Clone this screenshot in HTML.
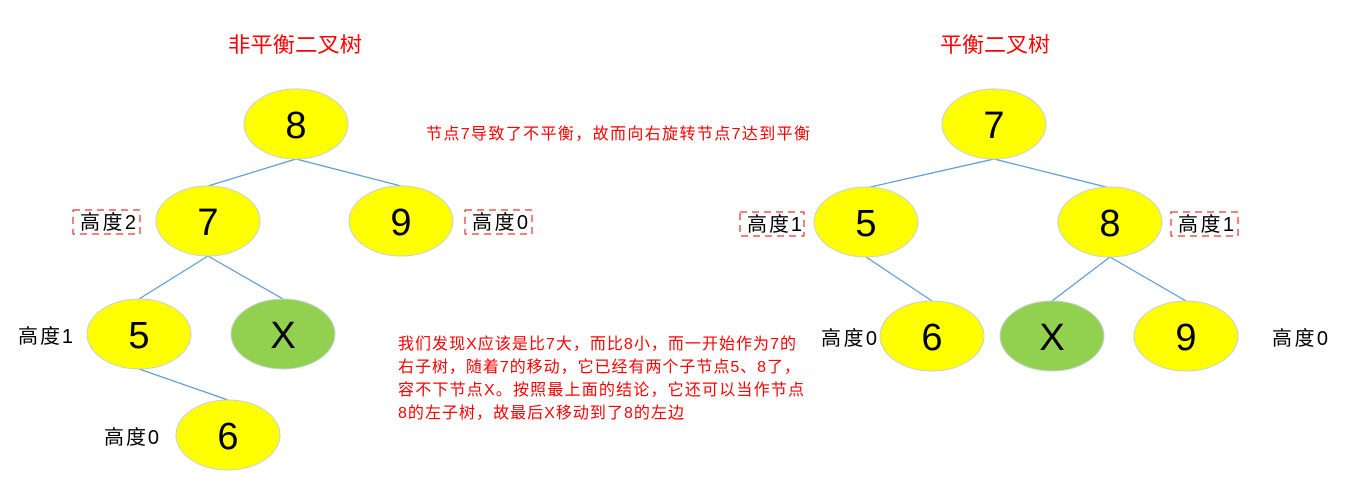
<html><body style="margin:0;background:#fff">
<svg width="1349" height="495" xmlns="http://www.w3.org/2000/svg" style="font-family:'Liberation Sans','Noto Sans CJK SC',sans-serif">
<g stroke="#5b9bd5" stroke-width="1.2">
<line x1="296" y1="159" x2="208" y2="186"/><line x1="296" y1="159" x2="401" y2="186"/>
<line x1="208" y1="256" x2="139" y2="299"/><line x1="208" y1="256" x2="283" y2="299"/>
<line x1="139" y1="369" x2="228" y2="400"/>
<line x1="994" y1="159" x2="866" y2="188"/><line x1="994" y1="159" x2="1110" y2="188"/>
<line x1="866" y1="257" x2="932" y2="301"/><line x1="1110" y1="257" x2="1052" y2="301"/><line x1="1110" y1="257" x2="1186" y2="301"/>
</g>
<g stroke="#c8d0dc" stroke-width="1">
<ellipse cx="296" cy="124" rx="52" ry="35" fill="#ffff00"/>
<ellipse cx="208" cy="221" rx="52" ry="35" fill="#ffff00"/>
<ellipse cx="401" cy="221" rx="52" ry="35" fill="#ffff00"/>
<ellipse cx="139" cy="334" rx="52" ry="35" fill="#ffff00"/>
<ellipse cx="283" cy="334" rx="52" ry="35" fill="#92d050"/>
<ellipse cx="228" cy="435" rx="52" ry="35" fill="#ffff00"/>
<ellipse cx="994" cy="124" rx="52" ry="35" fill="#ffff00"/>
<ellipse cx="866" cy="222" rx="52" ry="35" fill="#ffff00"/>
<ellipse cx="1110" cy="222" rx="52" ry="35" fill="#ffff00"/>
<ellipse cx="932" cy="336" rx="52" ry="35" fill="#ffff00"/>
<ellipse cx="1052" cy="336" rx="52" ry="35" fill="#92d050"/>
<ellipse cx="1186" cy="336" rx="52" ry="35" fill="#ffff00"/>
</g>
<g font-size="38" text-anchor="middle" fill="#000">
<text x="296" y="138">8</text><text x="208" y="235">7</text><text x="401" y="235">9</text>
<text x="139" y="348">5</text><text x="283" y="348">X</text><text x="228" y="449">6</text>
<text x="994" y="138">7</text><text x="866" y="236">5</text><text x="1110" y="236">8</text>
<text x="932" y="350">6</text><text x="1052" y="350">X</text><text x="1186" y="350">9</text>
</g>
<g font-size="20" fill="#000" lengthAdjust="spacingAndGlyphs">
<text x="80" y="229" textLength="56">高度2</text><text x="472" y="229" textLength="56">高度0</text>
<text x="18" y="343" textLength="55">高度1</text><text x="104" y="444" textLength="55">高度0</text>
<text x="747" y="231" textLength="55">高度1</text><text x="1178" y="231" textLength="56">高度1</text>
<text x="821" y="345" textLength="56">高度0</text><text x="1272" y="345" textLength="56">高度0</text>
</g>
<g fill="none" stroke="#e00" stroke-width="1" stroke-dasharray="7,5">
<rect x="73" y="210" width="67" height="24"/><rect x="465" y="210" width="67" height="24"/>
<rect x="740" y="212" width="64" height="24"/><rect x="1171" y="212" width="67" height="24"/>
</g>
<g fill="#ff0000">
<text x="228" y="52" font-size="21" textLength="134" lengthAdjust="spacingAndGlyphs">非平衡二叉树</text>
<text x="940" y="52" font-size="21" textLength="110" lengthAdjust="spacingAndGlyphs">平衡二叉树</text>
<g font-size="16" lengthAdjust="spacingAndGlyphs">
<text x="426" y="139" textLength="384">节点7导致了不平衡，故而向右旋转节点7达到平衡</text>
<text x="398" y="349" textLength="398">我们发现X应该是比7大，而比8小，而一开始作为7的</text>
<text x="398" y="372" textLength="402">右子树，随着7的移动，它已经有两个子节点5、8了，</text>
<text x="398" y="395" textLength="406">容不下节点X。按照最上面的结论，它还可以当作节点</text>
<text x="398" y="418" textLength="286">8的左子树，故最后X移动到了8的左边</text>
</g>
</g>
</svg>
</body></html>
